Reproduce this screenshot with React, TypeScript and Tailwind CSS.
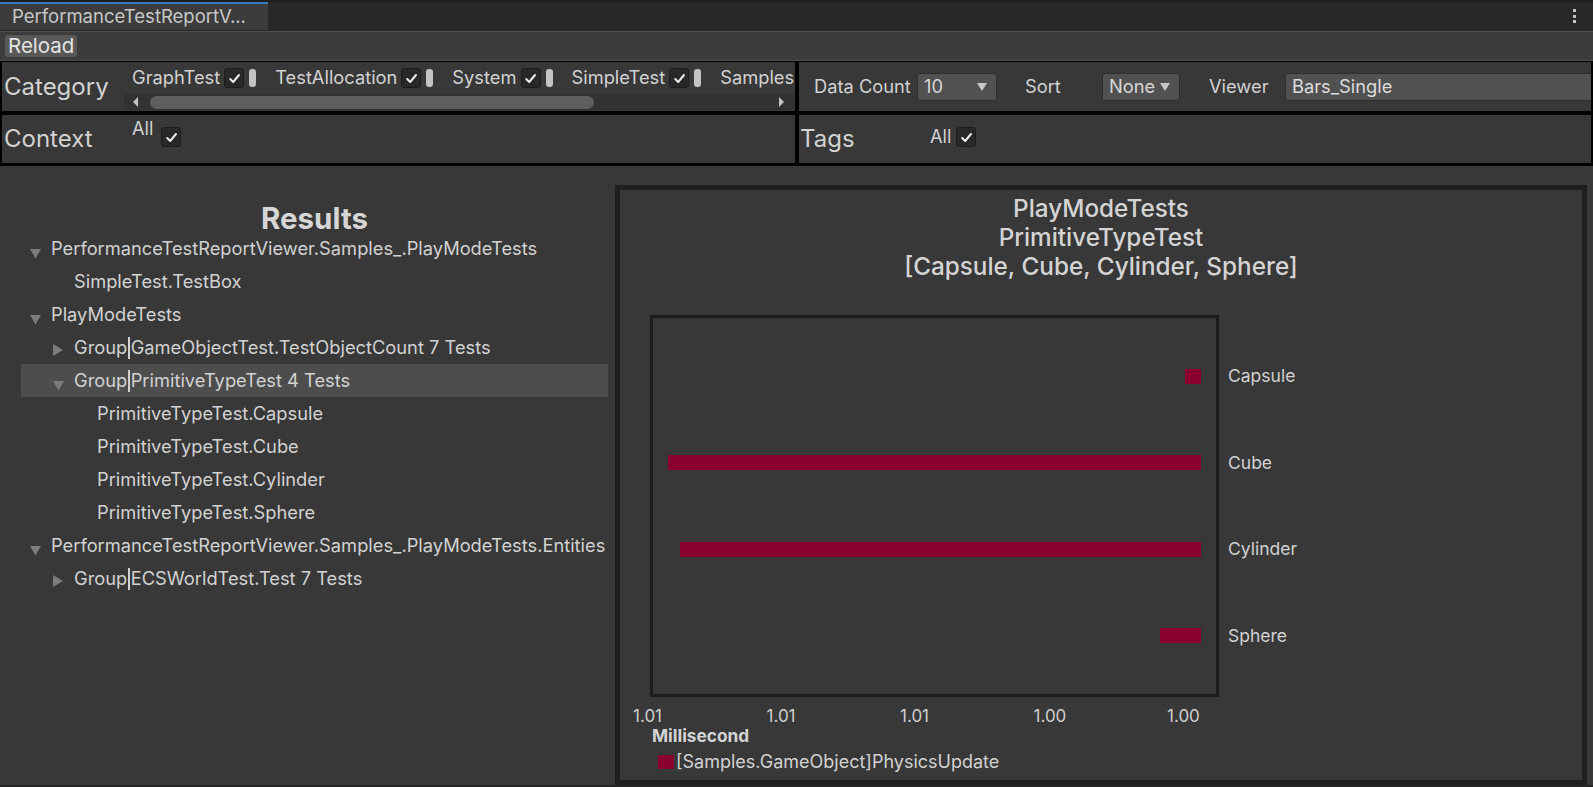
import React from "react";

const Check = () => (
  <svg width="13" height="13" viewBox="0 0 13 13">
    <path d="M2.2 7 L5.2 10 L11 3" stroke="#ececec" strokeWidth="2" fill="none" strokeLinecap="round" strokeLinejoin="round" />
  </svg>
);

function Checkbox() {
  return (
    <div className="w-[20px] h-[20px] shrink-0 rounded-[3px] bg-[#282828] border border-[#1c1c1c] flex items-center justify-center">
      <Check />
    </div>
  );
}

function CatItem({ label }: { label: string }) {
  return (
    <div className="flex items-center shrink-0">
      <span>{label}</span>
      <div className="ml-[4px]">
        <Checkbox />
      </div>
      <div className="ml-[5px] w-[7px] h-[18px] rounded-[3px] bg-[#c4c4c4]" />
    </div>
  );
}

function DownTri({ color = "#c4c4c4" }: { color?: string }) {
  return (
    <svg width="10" height="8" viewBox="0 0 10 8">
      <path d="M0 0 L10 0 L5 8 Z" fill={color} />
    </svg>
  );
}

function Dropdown({ text, w }: { text: string; w: string }) {
  return (
    <div className={`${w} h-[28px] shrink-0 rounded-[3px] bg-[#515151] border border-[#2e2e2e] flex items-center justify-between pl-[6px] pr-[9px] text-[#d6d6d6]`}>
      <span>{text}</span>
      <DownTri color="#c8c8c8" />
    </div>
  );
}

type Row = { level: number; text: string; arrow?: "down" | "right"; selected?: boolean };

const rows: Row[] = [
  { level: 0, text: "PerformanceTestReportViewer.Samples_.PlayModeTests", arrow: "down" },
  { level: 1, text: "SimpleTest.TestBox" },
  { level: 0, text: "PlayModeTests", arrow: "down" },
  { level: 1, text: "Group|GameObjectTest.TestObjectCount 7 Tests", arrow: "right" },
  { level: 1, text: "Group|PrimitiveTypeTest 4 Tests", arrow: "down", selected: true },
  { level: 2, text: "PrimitiveTypeTest.Capsule" },
  { level: 2, text: "PrimitiveTypeTest.Cube" },
  { level: 2, text: "PrimitiveTypeTest.Cylinder" },
  { level: 2, text: "PrimitiveTypeTest.Sphere" },
  { level: 0, text: "PerformanceTestReportViewer.Samples_.PlayModeTests.Entities", arrow: "down" },
  { level: 1, text: "Group|ECSWorldTest.Test 7 Tests", arrow: "right" },
];

function TreeArrow({ kind }: { kind?: "down" | "right" }) {
  if (!kind) return <div className="w-[21px] shrink-0" />;
  if (kind === "down")
    return (
      <div className="w-[21px] shrink-0 h-full pt-[17px]">
        <svg width="11" height="10" viewBox="0 0 11 10" className="block">
          <path d="M0 0 L11 0 L5.5 9.5 Z" fill="#7c7c7c" />
        </svg>
      </div>
    );
  return (
    <div className="w-[21px] shrink-0 h-full pt-[13px]">
      <svg width="11" height="12" viewBox="0 0 11 12" className="block">
        <path d="M0 0 L10 6 L0 12 Z" fill="#7c7c7c" />
      </svg>
    </div>
  );
}

function TreeText({ text }: { text: string }) {
  const i = text.indexOf("|");
  if (i < 0) return <span>{text}</span>;
  return (
    <span className="flex items-center">
      <span>{text.slice(0, i)}</span>
      <span className="inline-block w-[1.5px] h-[22px] bg-[#d2d2d2] mx-[1px]" />
      <span>{text.slice(i + 1)}</span>
    </span>
  );
}

const padFor = ["pl-[9px]", "pl-[32px]", "pl-[55px]"];

const bars = [
  { name: "Capsule", w: 16 },
  { name: "Cube", w: 533 },
  { name: "Cylinder", w: 521 },
  { name: "Sphere", w: 41 },
];

const ticks = ["1.01", "1.01", "1.01", "1.00", "1.00"];

export default function App() {
  return (
    <div className="w-[1593px] h-[787px] overflow-hidden bg-[#383838] flex flex-col font-['Inter',sans-serif] text-[#d2d2d2]">
      {/* Tab bar */}
      <div className="h-[31px] shrink-0 bg-[#282828] border-t-2 border-[#1e1e1e] flex items-start justify-between">
        <div className="w-[268px] h-[28px] bg-[#3c3c3c] border-t-2 border-[#3a79bb] flex items-center pl-[12px] text-[18.5px] text-[#c8c8c8] whitespace-nowrap overflow-hidden">
          PerformanceTestReportV...
        </div>
        <div className="flex flex-col gap-[2.5px] mr-[17px] mt-[7px]">
          <div className="w-[3px] h-[3px] bg-[#c4c4c4]" />
          <div className="w-[3px] h-[3px] bg-[#c4c4c4]" />
          <div className="w-[3px] h-[3px] bg-[#c4c4c4]" />
        </div>
      </div>

      {/* Toolbar */}
      <div className="h-[30px] shrink-0 bg-[#3c3c3c] border-t border-b border-[#4e4e4e] flex items-center pl-[5px]">
        <div className="h-[22px] px-[3px] rounded-[3px] bg-[#585858] flex items-center text-[20.5px] text-[#e4e4e4]">Reload</div>
      </div>

      {/* Filters */}
      <div className="shrink-0 bg-black pt-[1px] pb-[3px] px-[2px] grid grid-cols-[793px_792px] gap-x-[4px] gap-y-[4px]">
        {/* Category */}
        <div className="h-[49px] bg-[#383838] flex overflow-hidden">
          <div className="w-[122px] shrink-0 flex items-center pl-[2px] text-[24px]">Category</div>
          <div className="flex-1 flex flex-col overflow-hidden">
            <div className="h-[32px] flex items-center pl-[8px] gap-[19px] whitespace-nowrap text-[18.3px] overflow-hidden">
              <CatItem label="GraphTest" />
              <CatItem label="TestAllocation" />
              <CatItem label="System" />
              <CatItem label="SimpleTest" />
              <CatItem label="Samples" />
            </div>
            <div className="h-[16px] bg-[#323232] flex items-center">
              <div className="ml-[9px] w-0 h-0 border-y-[5px] border-y-transparent border-r-[5px] border-r-[#c4c4c4]" />
              <div className="ml-[12px] w-[444px] h-[13px] rounded-full bg-[#5e5e5e]" />
              <div className="ml-auto mr-[11px] w-0 h-0 border-y-[5px] border-y-transparent border-l-[5px] border-l-[#c4c4c4]" />
            </div>
          </div>
        </div>

        {/* Data count / sort / viewer */}
        <div className="h-[49px] bg-[#383838] flex items-center text-[18.3px] pl-[15px] overflow-hidden whitespace-nowrap">
          <span className="w-[103px] shrink-0">Data Count</span>
          <Dropdown text="10" w="w-[80px]" />
          <span className="ml-[28px] w-[77px] shrink-0">Sort</span>
          <Dropdown text="None" w="w-[78px]" />
          <span className="ml-[29px] w-[76px] shrink-0">Viewer</span>
          <div className="flex-1 -mr-[4px] h-[28px] rounded-l-[3px] bg-[#515151] border border-[#2e2e2e] flex items-center pl-[6px] text-[#dcdcdc]">Bars_Single</div>
        </div>

        {/* Context */}
        <div className="h-[48px] bg-[#383838] flex">
          <div className="w-[130px] shrink-0 flex items-center pl-[2px] text-[24px]">Context</div>
          <span className="mt-[3px] text-[18.3px] leading-[20px] h-[20px]">All</span>
          <div className="ml-[8px] mt-[12px]">
            <Checkbox />
          </div>
        </div>

        {/* Tags */}
        <div className="h-[48px] bg-[#383838] flex items-center">
          <div className="w-[131px] shrink-0 pl-[1px] text-[24px]">Tags</div>
          <span className="text-[18.3px] -mt-[4px]">All</span>
          <div className="ml-[5px] -mt-[4px]">
            <Checkbox />
          </div>
        </div>
      </div>

      {/* Main */}
      <div className="flex-1 flex border-b-2 border-[#262626]">
        {/* Tree */}
        <div className="w-[615px] shrink-0 pl-[21px] pr-[7px] pt-[38px]">
          <div className="h-[28px] leading-[28px] text-center text-[29.5px] font-bold text-[#d6d6d6]">Results</div>
          <div className="flex flex-col text-[18.3px] whitespace-nowrap">
            {rows.map((r, i) => (
              <div key={i} className={`h-[33px] flex items-center ${padFor[r.level]} ${r.selected ? "bg-[#4d4d4d]" : ""}`}>
                <TreeArrow kind={r.arrow} />
                <TreeText text={r.text} />
              </div>
            ))}
          </div>
        </div>

        {/* Chart */}
        <div className="flex-1 mt-[19px] mr-[6px] border-[5px] border-[#1f1f1f] flex flex-col">
          <div className="pt-[4px] text-center text-[24.3px] leading-[29px] font-medium text-[#d4d4d4]">
            <div>PlayModeTests</div>
            <div>PrimitiveTypeTest</div>
            <div>[Capsule, Cube, Cylinder, Sphere]</div>
          </div>
          <div className="mt-[34px] ml-[30px] flex">
            <div className="w-[569px] h-[382px] border-[3px] border-[#1c1c1c] flex flex-col py-[15px]">
              {bars.map((b) => (
                <div key={b.name} className="flex-1 flex items-center justify-end pr-[15px]">
                  <div className="h-[15px] bg-[#8a0031]" style={{ width: b.w }} />
                </div>
              ))}
            </div>
            <div className="ml-[9px] h-[382px] flex flex-col py-[18px] text-[17.5px]">
              {bars.map((b) => (
                <div key={b.name} className="flex-1 flex items-center">
                  {b.name}
                </div>
              ))}
            </div>
          </div>
          <div className="ml-[13px] mt-[9px] flex text-[17px] leading-[20px] text-[#cfcfcf]">
            {ticks.map((t, i) => (
              <div key={i} className="w-[133.5px] shrink-0">
                {t}
              </div>
            ))}
          </div>
          <div className="ml-[32px] text-[17.3px] leading-[20px] font-bold text-[#d4d4d4]">Millisecond</div>
          <div className="ml-[38px] mt-[6px] flex items-center text-[18px] leading-[20px]">
            <div className="w-[16px] h-[14px] bg-[#8a0031]" />
            <span className="ml-[2px]">[Samples.GameObject]PhysicsUpdate</span>
          </div>
        </div>
      </div>
    </div>
  );
}
